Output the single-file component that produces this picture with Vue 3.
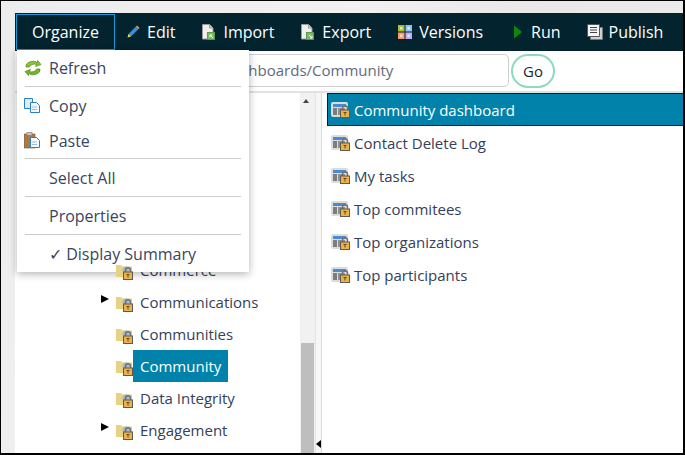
<template>
  <div class="page">
    <svg class="defs" width="0" height="0">
      <defs>
        <g id="lock">
          <path d="M2.500 5V3.200a2.500 2.500 0 0 1 5 0V5" fill="none" stroke="#6f7378" stroke-width="1.500" />
          <rect x="0.500" y="5" width="9" height="7.500" fill="#efb04a" stroke="#5d5a50" />
          <path d="M3.500 7.500h3M5 7.500v3" stroke="#5d4a20" />
        </g>
        <g id="sheet">
          <path d="M1.500 .5h7l3.500 3.500v11h-10.500z" fill="#efefef" stroke="#9a9a9a" />
          <path d="M8.500 .5v3.500h3.500" fill="#cfcfcf" stroke="#9a9a9a" />
          <rect x="6.500" y="8.500" width="7" height="7" fill="#7fb868" stroke="#5b9a48" />
        </g>
      </defs>
    </svg>

    <header class="toolbar">
      <button class="organize">Organize</button>
      <nav class="actions">
        <div class="action">
          <svg width="16" height="16" viewBox="0 0 16 16">
            <path d="M11 2.500l2.500 2.500-7.500 7.500-2.500-2.500z" fill="#3f8fd8" />
            <path d="M3.500 10l2.500 2.500-3.500 1z" fill="#f0e23c" />
            <path d="M11 2.500l1-1 2.500 2.500-1 1z" fill="#e8a84c" />
          </svg>
          <span>Edit</span>
        </div>
        <div class="action">
          <svg width="16" height="16" viewBox="0 0 16 16">
            <use href="#sheet" />
            <path d="M12 14l-3-3M9 13v-2h2" fill="none" stroke="#fff" />
          </svg>
          <span>Import</span>
        </div>
        <div class="action">
          <svg width="16" height="16" viewBox="0 0 16 16">
            <use href="#sheet" />
            <path d="M9 11l3 3M12 12v2h-2" fill="none" stroke="#fff" />
          </svg>
          <span>Export</span>
        </div>
        <div class="action">
          <svg width="16" height="16" viewBox="0 0 16 16">
            <rect x="1" y="1" width="6.500" height="6.500" fill="#a9bf3a" />
            <rect x="8.500" y="1" width="6.500" height="6.500" fill="#8cc4f5" />
            <rect x="1" y="8.500" width="6.500" height="6.500" fill="#fb9c6c" />
            <rect x="8.500" y="8.500" width="6.500" height="6.500" fill="#bcaff5" />
            <rect x="3" y="3" width="2.500" height="2.500" fill="#e4edb8" />
            <rect x="10.500" y="3" width="2.500" height="2.500" fill="#dcedfc" />
            <rect x="3" y="10.500" width="2.500" height="2.500" fill="#fde0d0" />
            <rect x="10.500" y="10.500" width="2.500" height="2.500" fill="#e8e3fc" />
          </svg>
          <span>Versions</span>
        </div>
        <div class="action">
          <svg width="16" height="16" viewBox="0 0 16 16">
            <path d="M5 1.500l8 6.500-8 6.500z" fill="#0a8a0a" />
          </svg>
          <span>Run</span>
        </div>
        <div class="action">
          <svg width="16" height="16" viewBox="0 0 16 16">
            <path d="M3.500 3.500h12v12h-12z" fill="#cfcfcf" stroke="#777" />
            <path d="M.5 .5h12v12H.5z" fill="#f6f6f6" stroke="#555" />
            <path d="M3 3.500h7M3 6h7M3 8.500h7" stroke="#444" />
          </svg>
          <span>Publish</span>
        </div>
      </nav>
    </header>

    <div class="address">
      <div class="path">Dashboards/Community</div>
      <button class="go">Go</button>
    </div>

    <main class="panes">
      <section class="tree">
        <div
          v-for="node in tree"
          :key="node.name"
          class="node"
        >
          <span class="arrow" :class="{ open: node.more }"></span>
          <svg class="folder" width="18" height="18" viewBox="0 0 18 18">
            <path d="M0 3h5l1.500 1.500H16V15H0z" fill="#e6d283" />
            <circle cx="10" cy="8" r="3.500" fill="#a9b7c6" />
            <use href="#lock" x="7" y="5" />
          </svg>
          <span class="label" :class="{ current: node.current }">{{ node.name }}</span>
        </div>
      </section>
      <div class="scrollbar">
        <span class="up"></span>
        <div class="thumb"></div>
      </div>
      <div class="splitter">
        <span class="collapse"></span>
      </div>
      <section class="list">
        <div
          v-for="(item, i) in dashboards"
          :key="item"
          class="row"
          :class="{ selected: i === 0 }"
        >
          <svg width="19" height="18" viewBox="0 0 19 18">
            <rect x="0" y="1" width="17" height="15" rx="2" fill="#dcdcdc" />
            <rect x="2" y="3" width="13" height="3" fill="#4a8bd0" />
            <rect x="2" y="7" width="4" height="7" fill="#7d7d7d" />
            <rect x="7" y="7" width="7" height="7" fill="#8f8f8f" />
            <use href="#lock" x="9" y="4" />
          </svg>
          <span>{{ item }}</span>
        </div>
      </section>
    </main>

    <div class="menu">
      <div class="entry">
        <svg width="18" height="18" viewBox="0 0 18 18">
          <path d="M2 8A7 5 0 0 1 13.500 3.500V1.500L17 5.500l-5.500 2 1.200-2A5 3.500 0 0 0 5.500 8z" fill="#8cc42c" stroke="#4f8a1a" stroke-width=".7" />
          <path d="M16 10A7 5 0 0 1 4.500 14.500V16.500L1 12.500l5.500-2-1.200 2A5 3.500 0 0 0 12.500 10z" fill="#74b52c" stroke="#4f8a1a" stroke-width=".7" />
        </svg>
        <span>Refresh</span>
      </div>
      <hr />
      <div class="entry">
        <svg width="18" height="18" viewBox="0 0 18 18">
          <path d="M.5 1.500h8v10h-8z" fill="#d8ecf9" stroke="#2d7fc0" />
          <path d="M6.500 5.500h6l3 3v7h-9z" fill="#f4fafe" stroke="#2d7fc0" />
          <path d="M8 10h5M8 12.500h5" stroke="#8fc1e6" />
        </svg>
        <span>Copy</span>
      </div>
      <div class="entry">
        <svg width="18" height="18" viewBox="0 0 18 18">
          <rect x="0" y="2" width="11" height="14" fill="#a87a4a" stroke="#7a5630" stroke-width=".6" />
          <rect x="3" y="0.500" width="5" height="3" fill="#c8c8c8" stroke="#777" stroke-width=".6" />
          <path d="M6.500 5.500h6l3 3v7h-9z" fill="#f4fafe" stroke="#2d7fc0" />
          <path d="M8 10h5M8 12.500h5" stroke="#8fc1e6" />
        </svg>
        <span>Paste</span>
      </div>
      <hr />
      <div class="entry"><i></i><span>Select All</span></div>
      <hr />
      <div class="entry"><i></i><span>Properties</span></div>
      <hr />
      <div class="entry"><i></i><span>✓ Display Summary</span></div>
    </div>
  </div>
</template>

<script setup>
const tree = [
  { name: 'Commerce' },
  { name: 'Communications', more: true },
  { name: 'Communities' },
  { name: 'Community', current: true },
  { name: 'Data Integrity' },
  { name: 'Engagement', more: true },
]

const dashboards = [
  'Community dashboard',
  'Contact Delete Log',
  'My tasks',
  'Top commitees',
  'Top organizations',
  'Top participants',
]
</script>

<style>
html, body { margin: 0; overflow: hidden; }
</style>

<style scoped>
.page {
  position: relative;
  box-sizing: border-box;
  width: 685px;
  height: 455px;
  padding: 12px 0 0 14px;
  border: solid #000;
  border-width: 1px 2px 2px 1px;
  overflow: hidden;
  display: flex;
  flex-direction: column;
  background: linear-gradient(115deg, #ececec 0%, #f1f1f1 40%, #e8e8e8 60%, #eeeeee 100%);
  font-family: "Open Sans", sans-serif;
  font-size: 16px;
  color: #34405a;
}
.defs { position: absolute; }

.toolbar {
  display: flex;
  align-items: center;
  height: 38px;
  flex-shrink: 0;
  background: #03242f;
  color: #fff;
}
.organize {
  box-sizing: border-box;
  width: 99px;
  height: 36px;
  margin-left: 1px;
  padding: 0;
  border: 1px solid #1a9bd8;
  background: transparent;
  color: #fff;
  font: inherit;
}
.actions { display: flex; gap: 26px; margin-left: 10px; }
.action { display: flex; align-items: center; gap: 6px; }
.action svg { flex-shrink: 0; }

.address {
  display: flex;
  gap: 2px;
  flex-shrink: 0;
  height: 42px;
  padding-top: 3px;
  box-sizing: border-box;
  background: #fff;
  border-bottom: 2px solid #e2e2e2;
}
.path {
  box-sizing: border-box;
  width: 489px;
  height: 33px;
  margin-left: 5px;
  padding-left: 201px;
  border: 1px solid #cfcfcf;
  border-radius: 5px;
  font-size: 15px;
  line-height: 31px;
  color: #5e6b7e;
  white-space: nowrap;
}
.go {
  box-sizing: border-box;
  width: 44px;
  height: 34px;
  padding: 0 0 1px;
  border: 2px solid #8fd9bf;
  border-radius: 17px;
  background: #fff;
  color: #1c2733;
  font: inherit;
  font-size: 15px;
}

.panes { flex: 1; display: flex; min-height: 0; background: #fff; font-size: 15px; }
.tree {
  box-sizing: border-box;
  width: 285px;
  padding-top: 161px;
  flex-shrink: 0;
}
.node {
  position: relative;
  display: flex;
  align-items: center;
  height: 32px;
  padding-left: 86px;
}
.arrow { width: 15px; flex-shrink: 0; }
.arrow.open::before {
  content: "";
  position: absolute;
  top: 9px;
  left: 86px;
  border-style: solid;
  border-width: 4.500px 0 4.500px 8px;
  border-color: transparent transparent transparent #000;
}
.folder { flex-shrink: 0; margin: 2px -1px 0 0; position: relative; z-index: 1; }
.label { padding: 0 7px; line-height: 32px; }
.label.current { background: #0082ab; color: #fff; }

.scrollbar {
  position: relative;
  width: 15px;
  flex-shrink: 0;
  background: #f1f1f1;
}
.up {
  position: absolute;
  top: 6px;
  left: 3px;
  border-style: solid;
  border-width: 0 3.500px 4px;
  border-color: transparent transparent #444;
}
.thumb {
  position: absolute;
  left: 1px;
  right: 1px;
  bottom: 0;
  height: 110px;
  background: #bebebe;
}
.splitter {
  position: relative;
  box-sizing: border-box;
  width: 7px;
  flex-shrink: 0;
  background: #f6f6f6;
  border-left: 1px solid #e4e4e4;
  border-right: 1px solid #dcdcdc;
}
.collapse {
  position: absolute;
  bottom: 5px;
  left: 0;
  border-style: solid;
  border-width: 4px 5px 4px 0;
  border-color: transparent #000 transparent transparent;
}

.list { flex: 1; padding-left: 5px; }
.row {
  box-sizing: border-box;
  display: flex;
  align-items: center;
  gap: 4px;
  height: 33px;
  padding-left: 3px;
  border: 1px solid transparent;
}
.row.selected { background: #0082ab; color: #fff; border-color: #03242f; border-right: none; }
.row svg { flex-shrink: 0; }

.menu {
  position: absolute;
  top: 49px;
  left: 16px;
  width: 232px;
  height: 222px;
  padding: 0 8px;
  box-sizing: border-box;
  background: #fff;
  box-shadow: 0 2px 8px rgba(0, 0, 0, 0.3);
}
.entry {
  display: flex;
  align-items: center;
  gap: 7px;
  height: 37px;
  color: #3a4560;
}
.entry:first-child { height: 36px; }
.entry + .entry { height: 34px; }
.entry i, .entry svg { width: 18px; flex-shrink: 0; margin-left: -1px; }
hr {
  margin: 0;
  border: none;
  border-top: 1px solid #cccccc;
}
</style>
